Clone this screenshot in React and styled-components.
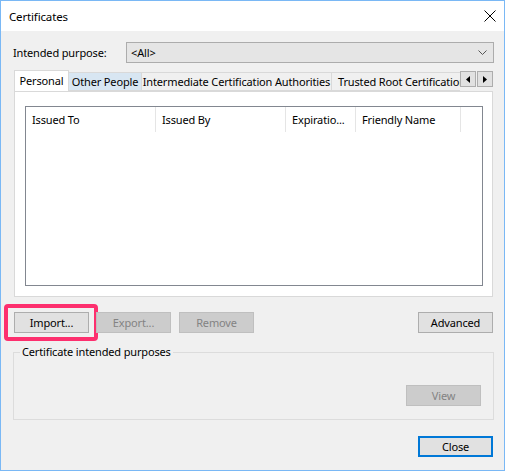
import React from 'react';
import styled, { createGlobalStyle } from 'styled-components';

const Global = createGlobalStyle`
  html, body { margin: 0; padding: 0; background: #fff; }
  * { box-sizing: border-box; }
`;

const Window = styled.div`
  width: 505px;
  height: 471px;
  border: 1px solid #7ab8f5;
  display: flex;
  flex-direction: column;
  font-family: "Noto Sans", "Open Sans", sans-serif;
  font-size: 11px;
  letter-spacing: -0.15px;
  color: #000;
  background: #f0f0f0;
`;

const TitleBar = styled.div`
  height: 30px;
  background: #fff;
  display: flex;
  align-items: center;
  justify-content: space-between;
  padding: 0 8px 0 8px;
  font-size: 11.5px;
`;

const CloseX = styled.div`
  width: 12px;
  height: 12px;
  display: flex;
`;

const Body = styled.div`
  flex: 1;
  display: flex;
  flex-direction: column;
  padding: 11px 11px 0 11px;
`;

const PurposeRow = styled.div`
  display: flex;
  align-items: center;
  height: 21px;
`;

const Label = styled.div`
  width: 114px;
  padding-left: 1px;
`;

const Combo = styled.div`
  flex: 1;
  height: 21px;
  margin-right: -1px;
  background: #e5e5e5;
  border: 1px solid #acacac;
  display: flex;
  align-items: center;
  justify-content: space-between;
  padding: 0 6px 0 4px;
`;

const TabStrip = styled.div`
  display: flex;
  margin: 7px 0 0 2px;
  height: 21px;
  position: relative;
  z-index: 1;
`;

const TabList = styled.div`
  display: flex;
  align-items: flex-end;
  flex: 1;
  overflow: hidden;
  min-width: 0;
`;

const Tab = styled.div`
  flex: none;
  width: ${({ w }) => w}px;
  height: ${({ active }) => (active ? 22 : 19)}px;
  margin-bottom: ${({ active }) => (active ? -1 : 0)}px;
  border: 1px solid #d9d9d9;
  border-bottom: ${({ active }) => (active ? 'none' : '1px solid #d9d9d9')};
  border-left: ${({ first, active }) => (first || active ? '1px solid #d9d9d9' : 'none')};
  background: ${({ active, hover }) => (active ? '#fff' : hover ? '#d8e6f2' : '#f0f0f0')};
  display: flex;
  align-items: center;
  justify-content: ${({ clip }) => (clip ? 'flex-start' : 'center')};
  padding: ${({ clip }) => (clip ? '0 0 0 6px' : '0')};
  padding-bottom: ${({ active }) => (active ? 3 : 0)}px;
  white-space: nowrap;
  overflow: hidden;
`;

const Arrows = styled.div`
  display: flex;
  gap: 1px;
  align-self: flex-start;
  margin-top: 1px;
`;

const ArrowBtn = styled.div`
  width: 16px;
  height: 16px;
  border: 1px solid #adadad;
  background: #e1e1e1;
  display: flex;
  align-items: center;
  justify-content: center;
`;

const Panel = styled.div`
  margin: 0 0 0 2px;
  height: 206px;
  background: #fff;
  border: 1px solid #d9d9d9;
  padding: 14px 9px 10px 10px;
`;

const List = styled.div`
  height: 100%;
  border: 1px solid #828790;
  background: #fff;
`;

const HeaderRow = styled.div`
  display: flex;
  height: 25px;
`;

const HeaderCell = styled.div`
  width: ${({ w }) => w}px;
  flex: ${({ grow }) => (grow ? 1 : 'none')};
  border-right: ${({ grow }) => (grow ? 'none' : '1px solid #e5e5e5')};
  padding-left: 6px;
  display: flex;
  align-items: center;
  white-space: nowrap;
  overflow: hidden;
`;

const ButtonRow = styled.div`
  display: flex;
  gap: 7px;
  margin: 15px 0 0 2px;
  align-items: center;
`;

const Button = styled.div`
  width: 75px;
  height: 21px;
  display: flex;
  align-items: center;
  justify-content: center;
  background: ${({ disabled }) => (disabled ? '#cccccc' : '#e1e1e1')};
  border: ${({ primary, disabled }) =>
    primary ? '2px solid #0078d7' : disabled ? '1px solid #bfbfbf' : '1px solid #adadad'};
  color: ${({ disabled }) => (disabled ? '#838383' : '#000')};
  margin-left: ${({ push, nudge }) => (push ? 'auto' : nudge ? '1px' : '0')};
  position: relative;
`;

const Highlight = styled.div`
  position: absolute;
  left: -11px;
  top: -9px;
  right: -10px;
  bottom: -9px;
  border: 4px solid #fd2f6e;
  border-radius: 4px;
  pointer-events: none;
`;

const Group = styled.fieldset`
  margin: 12px -1px 0 1px;
  padding: 0 12px 0 0;
  border: 1px solid #dcdcdc;
  height: 75px;
  display: flex;
  justify-content: flex-end;
  min-width: 0;
`;

const Legend = styled.legend`
  padding: 0 2px;
  margin-left: 6px;
  line-height: 14px;
`;

const GroupInner = styled.div`
  width: 100%;
  display: flex;
  justify-content: flex-end;
  padding-top: 26px;
`;

const Footer = styled.div`
  display: flex;
  justify-content: flex-end;
  margin-top: 16px;
`;

const tabs = [
  { label: 'Personal', w: 55, active: true, first: true },
  { label: 'Other People', w: 73, hover: true },
  { label: 'Intermediate Certification Authorities', w: 190 },
  { label: 'Trusted Root Certification Authorities', w: 200, clip: true },
];

const columns = [
  { label: 'Issued To', w: 130 },
  { label: 'Issued By', w: 130 },
  { label: 'Expiratio...', w: 70 },
  { label: 'Friendly Name', w: 105 },
  { label: '', grow: true },
];

export default function App() {
  return (
    <Window>
      <Global />
      <TitleBar>
        <span>Certificates</span>
        <CloseX>
          <svg width="12" height="12" viewBox="0 0 12 12">
            <path d="M0.5 0.5 L11.5 11.5 M11.5 0.5 L0.5 11.5" stroke="#000" strokeWidth="1" />
          </svg>
        </CloseX>
      </TitleBar>
      <Body>
        <PurposeRow>
          <Label>Intended purpose:</Label>
          <Combo>
            <span>&lt;All&gt;</span>
            <svg width="9" height="6" viewBox="0 0 9 6">
              <path d="M0.5 0.5 L4.5 4.5 L8.5 0.5" fill="none" stroke="#555" strokeWidth="1" />
            </svg>
          </Combo>
        </PurposeRow>
        <TabStrip>
          <TabList>
            {tabs.map((t) => (
              <Tab key={t.label} w={t.w} active={t.active} first={t.first} hover={t.hover} clip={t.clip}>
                {t.label}
              </Tab>
            ))}
          </TabList>
          <Arrows>
            <ArrowBtn>
              <svg width="4" height="7" viewBox="0 0 4 7"><path d="M4 0 L0 3.5 L4 7 Z" fill="#000" /></svg>
            </ArrowBtn>
            <ArrowBtn>
              <svg width="4" height="7" viewBox="0 0 4 7"><path d="M0 0 L4 3.5 L0 7 Z" fill="#000" /></svg>
            </ArrowBtn>
          </Arrows>
        </TabStrip>
        <Panel>
          <List>
            <HeaderRow>
              {columns.map((c, i) => (
                <HeaderCell key={i} w={c.w} grow={c.grow}>{c.label}</HeaderCell>
              ))}
            </HeaderRow>
          </List>
        </Panel>
        <ButtonRow>
          <Button>
            Import...
            <Highlight />
          </Button>
          <Button disabled>Export...</Button>
          <Button disabled nudge>Remove</Button>
          <Button push>Advanced</Button>
        </ButtonRow>
        <Group>
          <Legend>Certificate intended purposes</Legend>
          <GroupInner>
            <Button disabled>View</Button>
          </GroupInner>
        </Group>
        <Footer>
          <Button primary>Close</Button>
        </Footer>
      </Body>
    </Window>
  );
}
